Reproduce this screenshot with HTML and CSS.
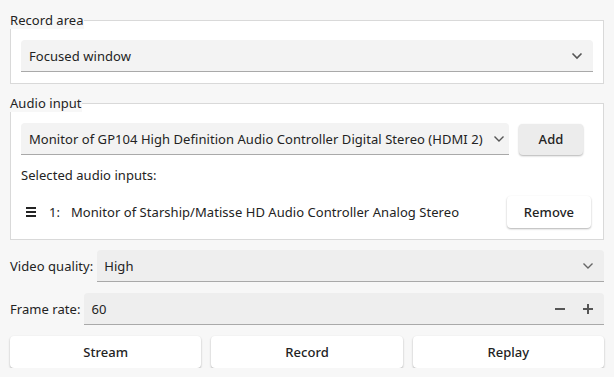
FILE: index.html
```html
<!DOCTYPE html>
<html lang="en">
<head>
    <meta charset="UTF-8">
    <title>Screen recorder</title>
    <link rel="stylesheet" href="styles.css">
</head>
<body>
    <!-- Record area -->
    <fieldset class="group">
        <legend>Record area</legend>
        <div class="combo">
            <span class="combo-text">Focused window</span>
            <svg class="chevron" width="12" height="8" viewBox="0 0 12 8"><path d="M1.5 1.5 L6 6 L10.5 1.5" fill="none" stroke="#555" stroke-width="1.6"/></svg>
        </div>
    </fieldset>

    <!-- Audio input -->
    <fieldset class="group">
        <legend>Audio input</legend>
        <div class="audio-row">
            <div class="combo combo-audio">
                <span class="combo-text">Monitor of GP104 High Definition Audio Controller Digital Stereo (HDMI 2)</span>
                <svg class="chevron" width="12" height="8" viewBox="0 0 12 8"><path d="M1.5 1.5 L6 6 L10.5 1.5" fill="none" stroke="#555" stroke-width="1.4"/></svg>
            </div>
            <button class="btn btn-add">Add</button>
        </div>
        <div class="selected-label">Selected audio inputs:</div>
        <div class="input-item">
            <svg class="handle" width="10" height="10" viewBox="0 0 10 10">
                <rect x="0" y="0" width="10" height="2" fill="#232323"/>
                <rect x="0" y="4" width="10" height="2" fill="#232323"/>
                <rect x="0" y="8" width="10" height="2" fill="#232323"/>
            </svg>
            <span class="item-num">1:</span>
            <span class="item-name">Monitor of Starship/Matisse HD Audio Controller Analog Stereo</span>
            <button class="btn btn-remove">Remove</button>
        </div>
    </fieldset>

    <!-- Quality + frame rate -->
    <div class="field-row">
        <span class="field-label">Video quality:</span>
        <div class="combo combo-flat">
            <span class="combo-text">High</span>
            <svg class="chevron" width="12" height="8" viewBox="0 0 12 8"><path d="M1.5 1.5 L6 6 L10.5 1.5" fill="none" stroke="#666" stroke-width="1.4"/></svg>
        </div>
    </div>
    <div class="field-row">
        <span class="field-label">Frame rate:</span>
        <div class="combo combo-flat">
            <span class="combo-text">60</span>
            <svg class="spin" width="12" height="12" viewBox="0 0 12 12"><rect x="1" y="5" width="10" height="2" fill="#555"/></svg>
            <svg class="spin" width="12" height="12" viewBox="0 0 12 12"><rect x="1" y="5" width="10" height="2" fill="#555"/><rect x="5" y="1" width="2" height="10" fill="#555"/></svg>
        </div>
    </div>

    <div class="actions">
        <button class="btn btn-action">Stream</button>
        <button class="btn btn-action">Record</button>
        <button class="btn btn-action">Replay</button>
    </div>
</body>
</html>
```

FILE: styles.css
```css
body {
    margin: 0;
    padding: 11px 10px 0 10px;
    background-color: #f7f7f7;
    font-family: 'Noto Sans', 'Open Sans', sans-serif;
    font-size: 13px;
    letter-spacing: 0.05px;
    line-height: 18px;
    color: #232323;
}
/* Group boxes */
.group {
    margin: 0 0 10px 0;
    padding: 11px 10px 11px 10px;
    border: 1px solid #d9d9d9;
    background-color: #fff;
    min-width: 0;
}
.group legend {
    padding: 0;
    margin-left: -11px;
    background-color: #f7f7f7;
    line-height: 18px;
}
/* Combo boxes */
.combo {
    display: flex;
    align-items: center;
    height: 31px;
    padding: 0 10px 0 8px;
    background-color: #f3f3f3;
    border-bottom: 1px solid #a9a9a9;
    border-radius: 4px 4px 0 0;
}
.combo-text {
    flex: 1;
    white-space: nowrap;
    overflow: hidden;
}
.combo-flat {
    flex: 1;
    background-color: #eeeeee;
    padding-left: 7px;
}
.chevron {
    flex: none;
}
.combo-audio {
    flex: 1;
    padding-right: 4px;
}
.combo-audio .chevron {
    margin-left: 2px;
}
.spin {
    flex: none;
    margin-left: 16px;
}
/* Buttons */
.btn {
    font-family: inherit;
    font-size: 13px;
    font-weight: 500;
    letter-spacing: 0.05px;
    color: #232323;
    border: none;
    border-radius: 4px;
    background-color: #fff;
    box-shadow: 0 1px 2px rgba(0, 0, 0, 0.3);
    cursor: pointer;
}
.btn-add {
    width: 64px;
    height: 31px;
    margin: 0 10px 0 10px;
    background-color: #ececec;
}
.btn-remove {
    width: 84px;
    height: 32px;
    margin-right: 2px;
}
/* Audio inputs */
.audio-row {
    display: flex;
    align-items: center;
}
.selected-label {
    margin-top: 11px;
}
.input-item {
    display: flex;
    align-items: center;
    margin-top: 12px;
}
.handle {
    margin: 0 13px 0 5px;
}
.item-num {
    width: 22px;
}
.item-name {
    flex: 1;
}
/* Rows */
.field-row {
    display: flex;
    align-items: center;
    margin-bottom: 11px;
}
.field-label {
    margin-right: 4px;
}
.actions {
    display: flex;
    gap: 10px;
}
.btn-action {
    flex: 1;
    height: 32px;
}
```
